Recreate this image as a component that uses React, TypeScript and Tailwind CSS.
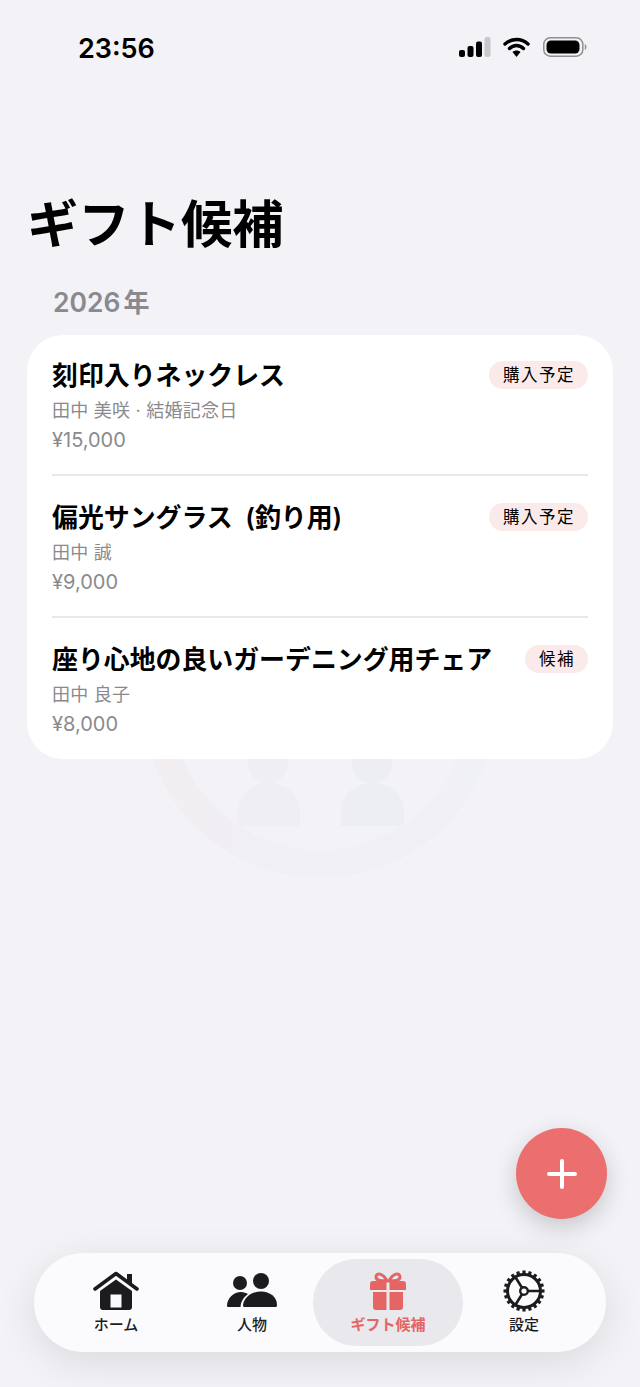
const FONT = 'font-["Inter","Noto_Sans_CJK_JP",sans-serif]';

const GIFTS = [
  { name: '刻印入りネックレス', meta: '田中 美咲 · 結婚記念日', price: '¥15,000', status: '購入予定' },
  { name: '偏光サングラス (釣り用)', meta: '田中 誠', price: '¥9,000', status: '購入予定' },
  { name: '座り心地の良いガーデニング用チェア', meta: '田中 良子', price: '¥8,000', status: '候補' },
];

function StatusBar() {
  return (
    <div className="flex h-[96px] items-center justify-between pl-[78px] pr-[52px]">
      <span className="text-[27px] font-semibold leading-none text-black">23:56</span>
      <div className="mt-[-2px] flex items-center gap-[12px]">
        <svg width="32" height="20" viewBox="0 0 32 20">
          <rect x="0" y="13" width="6" height="7" rx="2" fill="#000" />
          <rect x="8.500" y="9" width="6" height="11" rx="2" fill="#000" />
          <rect x="17" y="4.500" width="6" height="15.500" rx="2" fill="#000" />
          <rect x="25.500" y="0" width="6" height="20" rx="2" fill="#c7c7cc" />
        </svg>
        <svg width="27" height="20" viewBox="0 0 27 20">
          <path d="M2 7 C8.500 1 18.500 1 25 7" fill="none" stroke="#000" strokeWidth="3.400" strokeLinecap="round" />
          <path d="M6.500 11.500 C10.500 7.500 16.500 7.500 20.500 11.500" fill="none" stroke="#000" strokeWidth="3.400" strokeLinecap="round" />
          <path d="M9.500 15 C11.500 13 15.500 13 17.500 15 L13.500 20 Z" fill="#000" />
        </svg>
        <svg width="45" height="20" viewBox="0 0 45 20" className="ml-[1px]">
          <rect x="0.800" y="0.800" width="39" height="18.400" rx="6.500" fill="none" stroke="#8e8e93" strokeWidth="1.500" />
          <rect x="3.500" y="3.500" width="33" height="13" rx="4.500" fill="#000" />
          <path d="M41.800 7 C44 8 44 12 41.800 13 Z" fill="#8e8e93" />
        </svg>
      </div>
    </div>
  );
}

function Watermark() {
  return (
    <svg className="absolute left-[134px] top-[515px]" width="372" height="372" viewBox="0 0 372 372">
      <defs>
        <linearGradient id="ring" x1="0" y1="0" x2="1" y2="0">
          <stop offset="0" stopColor="#f2eef2" />
          <stop offset="0.500" stopColor="#f0f0f5" />
          <stop offset="1" stopColor="#f0f1f4" />
        </linearGradient>
      </defs>
      <circle cx="186" cy="186" r="184" fill="none" stroke="#f1f1f6" strokeWidth="2" />
      <circle cx="186" cy="186" r="163" fill="none" stroke="url(#ring)" strokeWidth="28" />
      <circle cx="134" cy="248" r="20" fill="#eeeef3" />
      <circle cx="238" cy="248" r="20" fill="#edeef2" />
      <path d="M104 311 V298 C104 258 166 258 166 298 V311 Z" fill="#eeeef3" />
      <path d="M207 311 V298 C207 258 270 258 270 298 V311 Z" fill="#edeef2" />
    </svg>
  );
}

function GiftRow({ gift, index }: { gift: (typeof GIFTS)[number]; index: number }) {
  const rowClass = [
    'h-[141px] border-b-2 border-[#e8e8ea] pt-[23px]',
    'mt-[1px] h-[141px] border-b-2 border-[#e8e8ea] pt-[23px]',
    'mt-[1px] h-[140px] pt-[23px]',
  ][index];
  return (
    <div className={rowClass}>
      <div className="flex items-start justify-between">
        <p className="text-[25.900px] font-semibold leading-[36px] text-black [word-spacing:6px]">{gift.name}</p>
        <span className="mt-[3px] flex h-[28px] items-center rounded-full bg-[#fbeaea] pl-[14px] pr-[13px] text-[16.500px] leading-none tracking-[1.500px] text-black">
          {gift.status}
        </span>
      </div>
      <p className="mt-[3px] text-[18px] leading-[28px] tracking-[0.250px] text-[#8a8a8e]">{gift.meta}</p>
      <p className="mt-[1px] text-[20px] leading-[28px] text-[#8a8a8e]">{gift.price}</p>
    </div>
  );
}

function HomeIcon() {
  return (
    <svg width="46" height="40" viewBox="0 0 46 40">
      <path d="M2 18 L23 2.500 L44 18" fill="none" stroke="#1c1c1e" strokeWidth="3.600" strokeLinecap="round" strokeLinejoin="round" />
      <rect x="34" y="3" width="5" height="10" fill="#1c1c1e" />
      <path d="M7 20 L23 8.500 L39 20 V36 Q39 39 36 39 H10 Q7 39 7 36 Z M17.500 23.500 V36.500 H28.500 V23.500 Z" fill="#1c1c1e" fillRule="evenodd" />
    </svg>
  );
}

function PeopleIcon() {
  return (
    <svg width="52" height="36" viewBox="0 0 52 36">
      <circle cx="14" cy="10" r="7" fill="#1c1c1e" />
      <circle cx="35" cy="8" r="8" fill="#1c1c1e" />
      <path d="M1 33 C1 25 8 19 15 19 C18 19 20 20 22 21 C18 24 15 28 14.500 34 H2 Q1 34 1 33 Z" fill="#1c1c1e" />
      <path d="M18 34 Q17 34 17 32 C18 24 26 18.500 35 18.500 C44 18.500 51 24 51 32 Q51 34 50 34 Z" fill="#1c1c1e" />
    </svg>
  );
}

function GiftIcon() {
  return (
    <svg width="36" height="40" viewBox="0 0 36 40">
      <path d="M17 10 C13 2 6 1 6 6 C6 10 12 10 17 10 Z M19 10 C23 2 30 1 30 6 C30 10 24 10 19 10 Z" fill="none" stroke="#e56464" strokeWidth="3" />
      <path d="M3 10 H16.500 V19 H0 V13 Q0 10 3 10 Z M19.500 10 H33 Q36 10 36 13 V19 H19.500 Z" fill="#e56464" />
      <path d="M3 21 H16.500 V39 H6 Q3 39 3 36 Z M19.500 21 H33 V36 Q33 39 30 39 H19.500 Z" fill="#e56464" />
    </svg>
  );
}

function CogIcon() {
  const teeth = Array.from({ length: 20 }, (_, i) => i * 18);
  return (
    <svg width="42" height="42" viewBox="0 0 42 42">
      {teeth.map((deg) => (
        <rect key={deg} x="19.400" y="0.500" width="3.200" height="5" fill="#1c1c1e" transform={`rotate(${deg} 21 21)`} />
      ))}
      <circle cx="21" cy="21" r="16.500" fill="none" stroke="#1c1c1e" strokeWidth="3" />
      <circle cx="21" cy="21" r="3.800" fill="none" stroke="#1c1c1e" strokeWidth="2.400" />
      <path d="M24.800 21 H37 M19 17.700 L12 6.500 M19 24.300 L12 35.500" stroke="#1c1c1e" strokeWidth="2.600" />
    </svg>
  );
}

function TabItem({ icon, label, active }: { icon: React.ReactNode; label: string; active?: boolean }) {
  return (
    <div className="flex justify-center">
      <div
        className={
          active
            ? 'flex h-[87px] w-[150px] shrink-0 flex-col items-center rounded-full bg-[#e8e8ed] pt-[12px]'
            : 'flex h-[87px] w-[136px] shrink-0 flex-col items-center pt-[12px]'
        }
      >
        <div className="flex h-[40px] items-center justify-center">{icon}</div>
        <span className={active ? 'mt-[3px] text-[15px] font-semibold leading-[22px] text-[#e56464]' : 'mt-[3px] text-[15px] font-medium leading-[22px] text-[#1c1c1e]'}>
          {label}
        </span>
      </div>
    </div>
  );
}

export default function App() {
  return (
    <div className={`${FONT} relative flex h-[1387px] w-[640px] flex-col overflow-hidden bg-[#f2f2f7]`}>
      <Watermark />
      <div className="relative">
        <StatusBar />
        <h1 className="mt-[94px] pl-[27px] text-[51.300px] font-bold leading-[68px] text-black">ギフト候補</h1>
        <h2 className="mt-[24px] pl-[53px] text-[26.500px] font-semibold leading-[40px] text-[#8a8a8e]">
          2026<span className="ml-[3px] text-[26px]">年</span>
        </h2>
        <section className="mx-[27px] mt-[12px] rounded-[36px] bg-white px-[25px]">
          {GIFTS.map((gift, i) => (
            <GiftRow key={gift.name} gift={gift} index={i} />
          ))}
        </section>
      </div>

      {/* add button */}
      <button className="absolute left-[516px] top-[1128px] flex h-[91px] w-[91px] items-center justify-center rounded-full bg-[#ec6f6f] shadow-[0_8px_24px_rgba(0,0,0,0.18)]">
        <svg width="30" height="30" viewBox="0 0 30 30">
          <path d="M15 2 V28 M2 15 H28" stroke="#fff" strokeWidth="4" strokeLinecap="round" />
        </svg>
      </button>

      <nav className="relative mx-[34px] mb-[35px] mt-auto grid h-[99px] grid-cols-4 items-center rounded-[50px] bg-[#fbfbfd] px-[14px] shadow-[0_10px_40px_rgba(0,0,0,0.10)]">
        <TabItem icon={<HomeIcon />} label="ホーム" />
        <TabItem icon={<PeopleIcon />} label="人物" />
        <TabItem icon={<GiftIcon />} label="ギフト候補" active />
        <TabItem icon={<CogIcon />} label="設定" />
      </nav>
    </div>
  );
}
